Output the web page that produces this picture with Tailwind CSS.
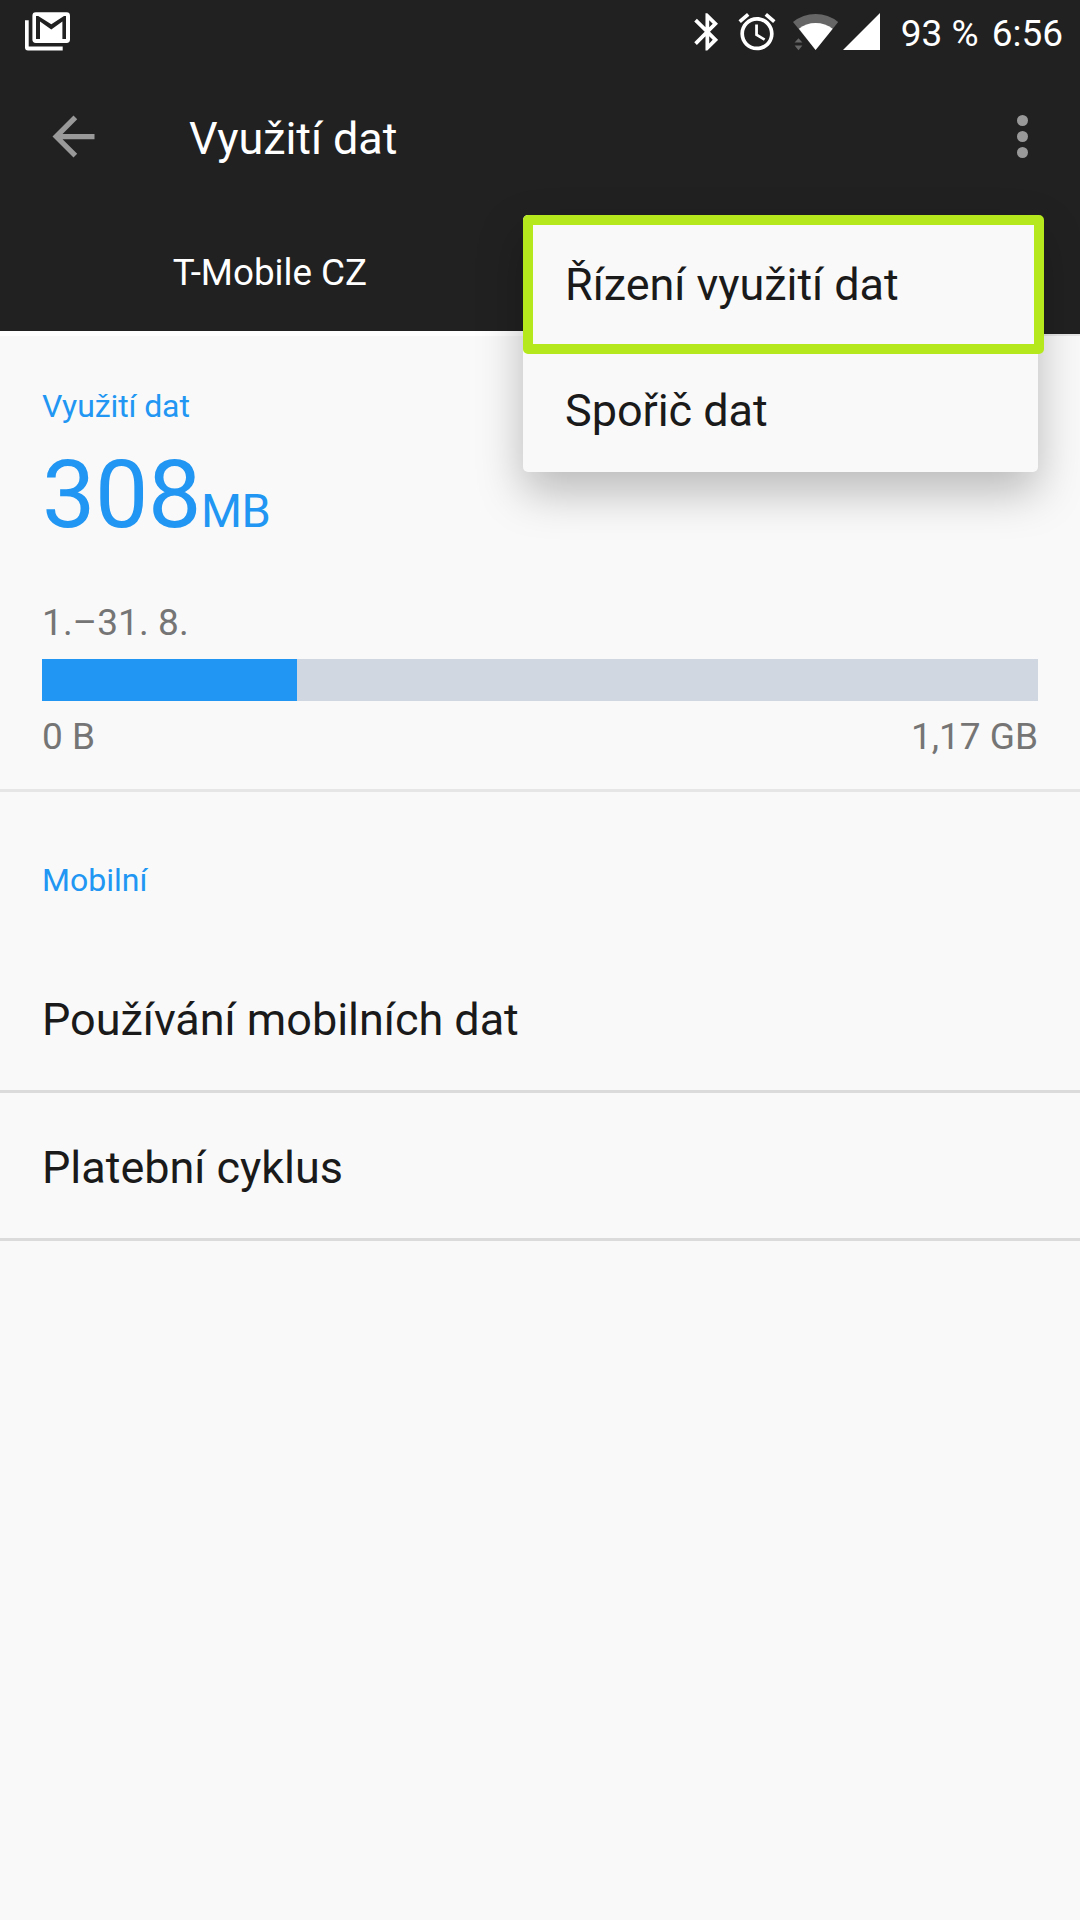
<!DOCTYPE html>
<html lang="cs">
	<head>
		<meta charset="UTF-8" />
		<meta
			name="viewport"
			content="width=device-width, initial-scale=1.0"
		/>
		<title>Využití dat</title>

		<script src="https://cdn.jsdelivr.net/npm/@tailwindcss/browser@4"></script>
	</head>
	<body class="relative w-[1080px] h-[1920px] overflow-hidden bg-[#f9f9f9] font-[Roboto,sans-serif] text-[#1a1a1a]">
		<!-- HEADER -->
		<header class="h-[336px] flex flex-col bg-[#212121] text-white">
			<!-- Status bar -->
			<div class="h-16 shrink-0 flex items-start pl-[25px] pr-[17px]">
				<svg
					class="w-[46px] h-16 mr-auto"
					viewBox="25 0 46 64"
					fill="#fff"
				>
					<path d="M25 20.2h3.7v26.3h34v4H28a3 3 0 0 1-3-3z" />
					<rect x="32.4" y="12.3" width="37.6" height="30.7" rx="3.4" />
					<path
						fill="#212121"
						d="M36 39V16h2.2l13.1 8.3L64 16h2v23h-3.6V21.6l-11.1 7.9L40 21.6V39z"
					/>
				</svg>
				<svg
					class="w-6 h-16 mr-[21px]"
					viewBox="694 0 24 64"
					fill="#fff"
				>
					<path
						transform="translate(684.9 9.4) scale(1.87)"
						d="M17.71 7.71L12 2h-1v7.59L6.41 5 5 6.41 10.59 12 5 17.59 6.41 19 11 14.41V22h1l5.71-5.71-4.3-4.29 4.3-4.29zM13 5.83l1.88 1.88L13 9.59V5.83zm1.88 10.46L13 18.17v-3.76l1.88 1.88z"
					/>
				</svg>
				<svg
					class="w-9 h-16 mr-[18px] overflow-visible"
					viewBox="739 0 36 64"
					fill="#fff"
				>
					<path
						transform="translate(734.8 9.6) scale(1.85)"
						d="M22 5.72l-4.6-3.86-1.29 1.53 4.6 3.86L22 5.72zM7.88 3.39L6.6 1.86 2 5.71l1.29 1.53 4.59-3.85zM12.5 8H11v6l4.75 2.85.75-1.23-4-2.37V8zM12 4c-4.97 0-9 4.03-9 9s4.02 9 9 9c4.97 0 9-4.03 9-9s-4.03-9-9-9zm0 16c-3.87 0-7-3.13-7-7s3.13-7 7-7 7 3.13 7 7-3.13 7-7 7z"
					/>
				</svg>
				<svg
					class="w-[45px] h-16 mr-[5px] overflow-visible"
					viewBox="793 0 45 64"
				>
					<path fill="#666" d="M793 22Q803 14 815.6 14T838.2 22L815.6 50z" />
					<path fill="#fff" d="M798.9 28.7Q806 23 815.6 23T832.7 28.7L815.6 50z" />
					<path fill="#666" d="M794.6 42.6l3.9-4.4 3.9 4.4zM794.6 45.6h7.8l-3.9 4.6z" />
				</svg>
				<svg
					class="w-[37px] h-16 mr-[21px]"
					viewBox="843 0 37 64"
					fill="#fff"
				>
					<path d="M843 50L880 13v37z" />
				</svg>
				<div class="flex gap-[13px] text-[37px] leading-[67px]">
					<span>93 %</span>
					<span>6:56</span>
				</div>
			</div>
			<!-- Toolbar -->
			<div class="h-[146px] shrink-0 flex items-center pl-[42px] pr-[52px] pb-[2px]">
				<svg
					class="w-[63px] h-[63px]"
					viewBox="0 0 24 24"
					fill="#999"
				>
					<path d="M20 11H7.83l5.59-5.59L12 4l-8 8 8 8 1.41-1.41L7.83 13H20v-2z" />
				</svg>
				<h1 class="ml-[84px] pt-[5px] text-[45px] leading-[54px] tracking-[-0.1px]">Využití dat</h1>
				<div class="ml-auto flex flex-col gap-[5px]">
					<span class="w-[11px] h-[11px] rounded-full bg-[#999]"></span>
					<span class="w-[11px] h-[11px] rounded-full bg-[#999]"></span>
					<span class="w-[11px] h-[11px] rounded-full bg-[#999]"></span>
				</div>
			</div>
			<!-- Tabs -->
			<div class="flex-1 grid grid-cols-2">
				<div class="flex items-center justify-center pt-[5px] border-b-5 border-white text-[36.8px]">T-Mobile CZ</div>
				<div class="border-b-2 border-[#e6e6e6]"></div>
			</div>
		</header>
		<!-- HEADER (END) -->

		<!-- MAIN CONTENT -->
		<main>
			<section class="px-[42px] pt-[46px] pb-[30px] border-b-3 border-[#e6e6e6]">
				<h2 class="text-[32px] leading-[48px] tracking-[-0.1px] text-[#2196f3]">Využití dat</h2>
				<div class="mt-[15px] h-[100px] text-[95px] leading-[100px] tracking-[-0.4px] text-[#2196f3]">308<span class="text-[47px] leading-none">MB</span></div>
				<div class="mt-14 text-[37px] leading-[44px] tracking-[0.1px] text-[#757575]">1.–31. 8.</div>
				<div class="mt-[14px] h-[42px] bg-[#d0d7e1]">
					<div class="w-[255px] h-full bg-[#2196f3]"></div>
				</div>
				<div class="mt-[14px] flex justify-between text-[37px] leading-[44px] text-[#757575]">
					<span>0 B</span>
					<span>1,17 GB</span>
				</div>
			</section>

			<section class="pt-16">
				<h2 class="px-[42px] text-[32px] leading-[48px] text-[#2196f3]">Mobilní</h2>
				<ul class="mt-[41px] text-[45px] tracking-[-0.03px]">
					<li class="h-[148px] flex items-center px-[42px] pt-1 border-b-3 border-[#dbdbdb]">Používání mobilních dat</li>
					<li class="h-[148px] flex items-center px-[42px] pt-1 border-b-3 border-[#dbdbdb]">Platební cyklus</li>
				</ul>
			</section>
		</main>
		<!-- MAIN CONTENT (END) -->

		<!-- OVERFLOW MENU -->
		<div class="absolute top-[215px] left-[523px] w-[515px] h-[257px] rounded-[5px] bg-[#f9f9f9] text-[45px] leading-[54px] tracking-[-0.05px] shadow-[0_20px_46px_rgba(0,0,0,0.26)]">
			<div class="w-[521px] h-[139px] pl-8 pt-[33px] rounded-[5px] border-10 border-[#b6e81e]">Řízení využití dat</div>
			<div class="pl-[42px] pt-[30px]">Spořič dat</div>
		</div>
		<!-- OVERFLOW MENU (END) -->
	</body>
</html>
